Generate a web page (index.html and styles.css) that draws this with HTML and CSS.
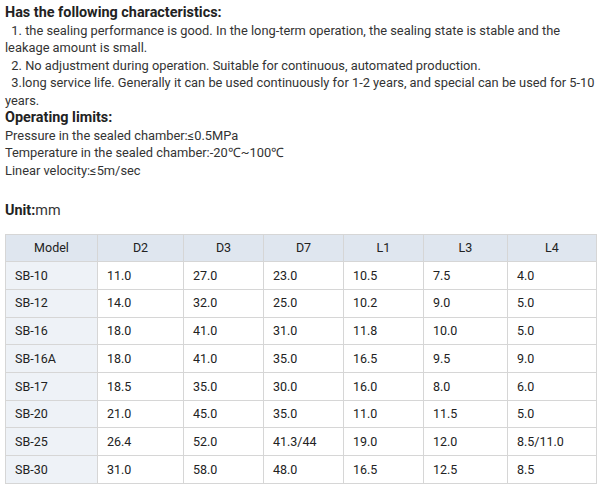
FILE: index.html
```html
<!DOCTYPE html>
<html>
<head>
<meta charset="utf-8">
<link rel="stylesheet" href="styles.css">
</head>
<body>
<div class="page">
  <h3 class="title">Has the following characteristics:</h3>
  <p class="line">&nbsp; 1. the sealing performance is good. In the long-term operation, the sealing state is stable and the leakage amount is small.</p>
  <p class="line">&nbsp; 2. No adjustment during operation. Suitable for continuous, automated production.</p>
  <p class="line">&nbsp; 3.long service life. Generally it can be used continuously for 1-2 years, and special can be used for 5&#8209;10 years.</p>
  <h3 class="title">Operating limits:</h3>
  <p class="line">Pressure in the sealed chamber:≤0.5MPa</p>
  <p class="line">Temperature in the sealed chamber:-20℃~100℃</p>
  <p class="line">Linear velocity:≤5m/sec</p>
  <p class="line blank">&nbsp;</p>
  <p class="unit"><b>Unit:</b>mm</p>
  <table class="spec">
    <colgroup>
      <col class="c-model"><col class="c-d2"><col class="c-d3"><col class="c-d7"><col class="c-l1"><col class="c-l3"><col class="c-l4">
    </colgroup>
    <thead>
      <tr><th>Model</th><th>D2</th><th>D3</th><th>D7</th><th>L1</th><th>L3</th><th>L4</th></tr>
    </thead>
    <tbody>
      <tr><td>SB-10</td><td>11.0</td><td>27.0</td><td>23.0</td><td>10.5</td><td>7.5</td><td>4.0</td></tr>
      <tr><td>SB-12</td><td>14.0</td><td>32.0</td><td>25.0</td><td>10.2</td><td>9.0</td><td>5.0</td></tr>
      <tr><td>SB-16</td><td>18.0</td><td>41.0</td><td>31.0</td><td>11.8</td><td>10.0</td><td>5.0</td></tr>
      <tr><td>SB-16A</td><td>18.0</td><td>41.0</td><td>35.0</td><td>16.5</td><td>9.5</td><td>9.0</td></tr>
      <tr><td>SB-17</td><td>18.5</td><td>35.0</td><td>30.0</td><td>16.0</td><td>8.0</td><td>6.0</td></tr>
      <tr><td>SB-20</td><td>21.0</td><td>45.0</td><td>35.0</td><td>11.0</td><td>11.5</td><td>5.0</td></tr>
      <tr><td>SB-25</td><td>26.4</td><td>52.0</td><td>41.3/44</td><td>19.0</td><td>12.0</td><td>8.5/11.0</td></tr>
      <tr><td>SB-30</td><td>31.0</td><td>58.0</td><td>48.0</td><td>16.5</td><td>12.5</td><td>8.5</td></tr>
    </tbody>
  </table>
</div>
</body>
</html>
```
FILE: styles.css
```css
html, body {
  margin: 0;
  padding: 0;
  background: #fff;
}
.page {
  padding: 4px 0 0 5px;
  font-family: Roboto, "Liberation Sans", sans-serif;
  color: #333;
  font-size: 12.85px;
  line-height: 17.5px;
}
.title {
  margin: 0;
  font-size: 14.4px;
  font-weight: bold;
  color: #222;
  line-height: 17.5px;
}
.line {
  margin: 0;
}
.unit {
  margin: 4px 0 0 0;
  font-size: 14.4px;
  line-height: 20px;
}
.unit b {
  color: #222;
}
.spec {
  margin-top: 13px;
  width: 591px;
  table-layout: fixed;
  border-collapse: collapse;
  font-size: 12.5px;
  color: #222;
}
.c-model { width: 92px; }
.c-d2 { width: 86px; }
.c-d3 { width: 80px; }
.c-d7 { width: 80px; }
.c-l1 { width: 80px; }
.c-l3 { width: 84px; }
.c-l4 { width: 89px; }
.spec th, .spec td {
  border: 1px solid #d6d6d6;
  height: 26.7px;
  padding: 0 0 0 9px;
  text-align: left;
  font-weight: normal;
}
.spec th {
  background: #dfe6ef;
  text-align: center;
  padding: 0;
}
.spec td:first-child {
  background: #eef2f7;
}
```
